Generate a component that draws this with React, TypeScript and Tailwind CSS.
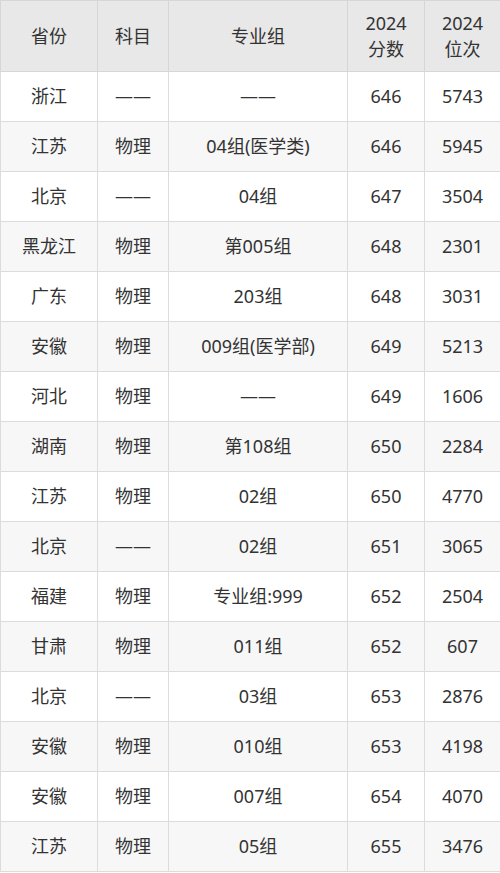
const rows: string[][] = [
  ['浙江', '——', '——', '646', '5743'],
  ['江苏', '物理', '04组(医学类)', '646', '5945'],
  ['北京', '——', '04组', '647', '3504'],
  ['黑龙江', '物理', '第005组', '648', '2301'],
  ['广东', '物理', '203组', '648', '3031'],
  ['安徽', '物理', '009组(医学部)', '649', '5213'],
  ['河北', '物理', '——', '649', '1606'],
  ['湖南', '物理', '第108组', '650', '2284'],
  ['江苏', '物理', '02组', '650', '4770'],
  ['北京', '——', '02组', '651', '3065'],
  ['福建', '物理', '专业组:999', '652', '2504'],
  ['甘肃', '物理', '011组', '652', '607'],
  ['北京', '——', '03组', '653', '2876'],
  ['安徽', '物理', '010组', '653', '4198'],
  ['安徽', '物理', '007组', '654', '4070'],
  ['江苏', '物理', '05组', '655', '3476'],
]

export default function App() {
  return (
    <div className="w-[500px] h-[873px] bg-white font-['Noto_Sans','Noto_Sans_CJK_SC',sans-serif] text-[18px] text-[#333]">
      <table className="w-[500px] border-collapse table-fixed">
        <colgroup>
          <col className="w-[97px]" />
          <col className="w-[71px]" />
          <col className="w-[179px]" />
          <col className="w-[77px]" />
          <col className="w-[76px]" />
        </colgroup>
        <thead>
          <tr className="h-[71px] bg-[#e8e8e8]">
            <th className="border border-[#d6d6d6] font-normal text-center">省份</th>
            <th className="border border-[#d6d6d6] font-normal text-center">科目</th>
            <th className="border border-[#d6d6d6] font-normal text-center">专业组</th>
            <th className="border border-[#d6d6d6] font-normal text-center leading-[26px]">
              2024
              <br />
              分数
            </th>
            <th className="border border-[#d6d6d6] font-normal text-center leading-[26px]">
              2024
              <br />
              位次
            </th>
          </tr>
        </thead>
        <tbody>
          {rows.map((r, i) => (
            <tr key={i} className={i % 2 === 0 ? 'h-[50px] bg-white' : 'h-[50px] bg-[#f7f7f7]'}>
              {r.map((c, j) => (
                <td key={j} className="border border-[#dcdcdc] text-center p-0">
                  {c}
                </td>
              ))}
            </tr>
          ))}
        </tbody>
      </table>
    </div>
  )
}
